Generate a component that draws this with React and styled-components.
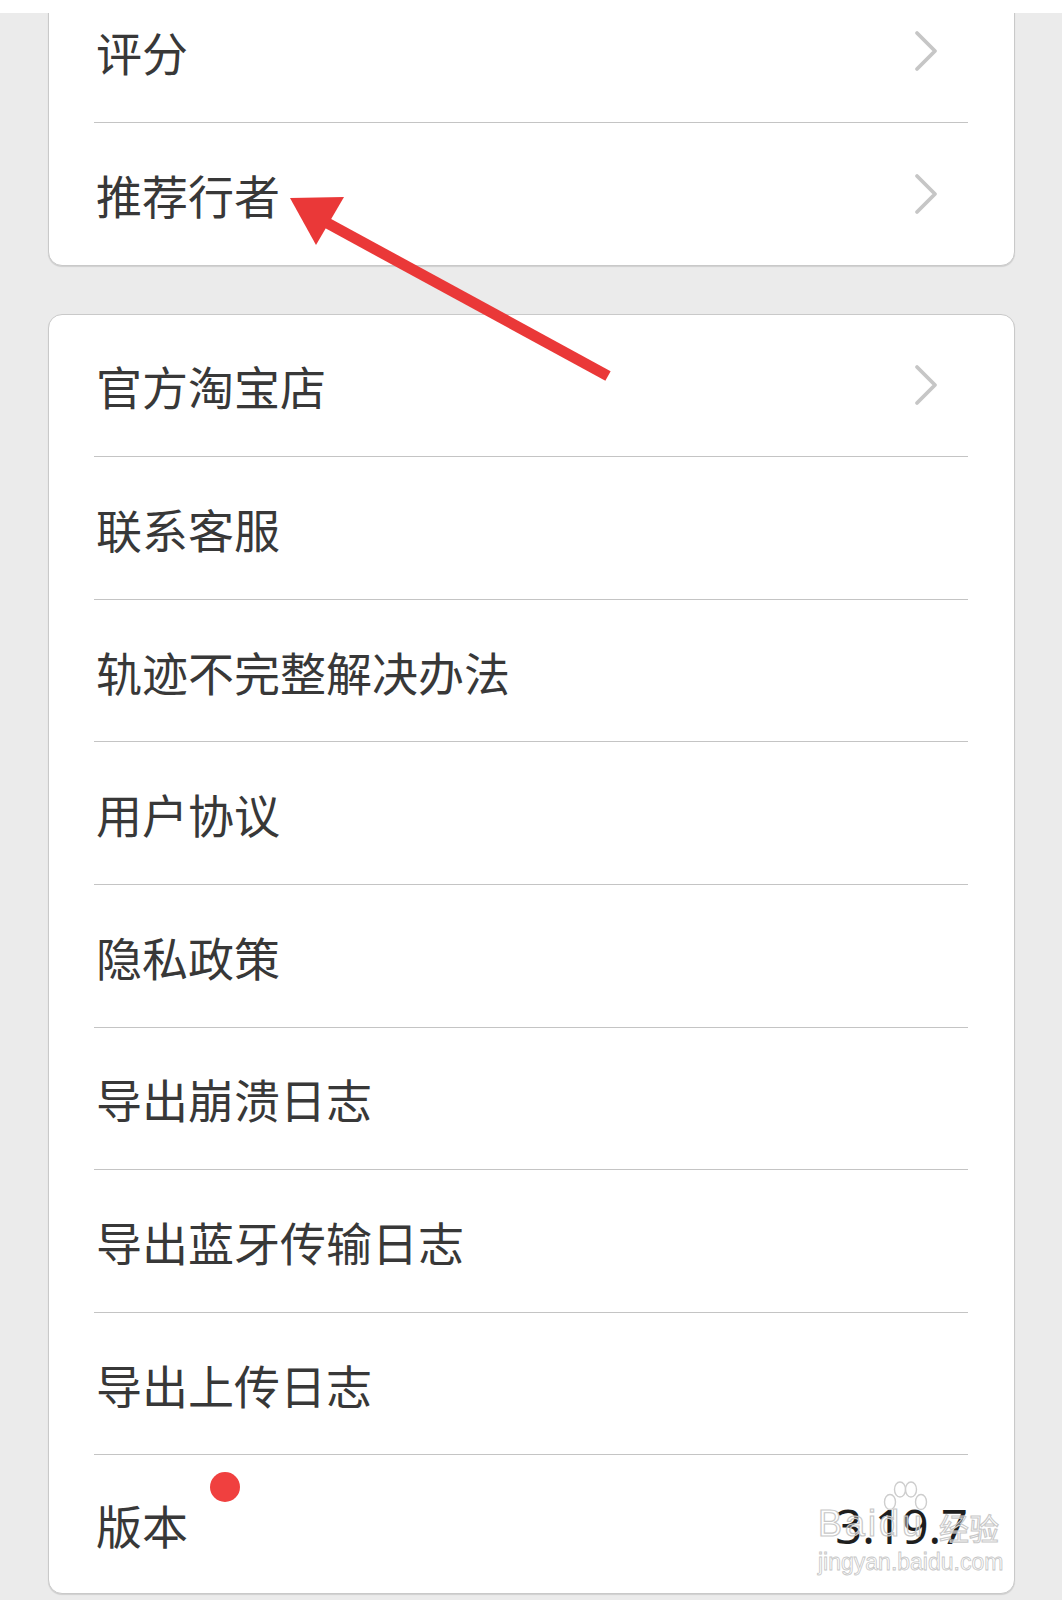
import React from "react";
import styled, { createGlobalStyle } from "styled-components";

const GlobalStyle = createGlobalStyle`
  html, body {
    margin: 0;
    padding: 0;
    background: #ebebeb;
  }
  body {
    font-family: "Noto Sans CJK SC", "Noto Sans", sans-serif;
  }
`;

const groups = [
  [
    { label: "评分", more: true },
    { label: "推荐行者", more: true },
  ],
  [
    { label: "官方淘宝店", more: true },
    { label: "联系客服" },
    { label: "轨迹不完整解决办法" },
    { label: "用户协议" },
    { label: "隐私政策" },
    { label: "导出崩溃日志" },
    { label: "导出蓝牙传输日志" },
    { label: "导出上传日志" },
    { label: "版本", dot: true, value: "3.19.7" },
  ],
];

function Chevron() {
  return (
    <ChevronIcon width="24" height="42" viewBox="0 0 24 42">
      <polyline
        points="3,3 21,21 3,39"
        fill="none"
        stroke="#c6c6c6"
        strokeWidth="3.8"
        strokeLinecap="round"
        strokeLinejoin="round"
      />
    </ChevronIcon>
  );
}

function Paw() {
  return (
    <PawIcon width="46" height="36" viewBox="0 0 46 36">
      <g fill="rgba(255,255,255,0.5)" stroke="#cdcdcd" strokeWidth="1.4">
        <ellipse cx="8" cy="21" rx="5.5" ry="7.5" />
        <ellipse cx="18" cy="8.5" rx="5.5" ry="7.5" />
        <ellipse cx="29" cy="8.5" rx="5.5" ry="7.5" />
        <ellipse cx="39" cy="21" rx="5.5" ry="7.5" />
      </g>
    </PawIcon>
  );
}

export default function App() {
  return (
    <>
      <GlobalStyle />
      <Page>
        <TopBar />
        <List>
          {groups.map((rows, gi) => (
            <Card key={gi}>
              {rows.map((r) => (
                <Row key={r.label} $short={!!r.value}>
                  <Label>
                    {r.label}
                    {r.dot && <Dot />}
                  </Label>
                  {r.more && <Chevron />}
                  {r.value && <Value>{r.value}</Value>}
                </Row>
              ))}
            </Card>
          ))}
        </List>

        <Arrow width="1062" height="1600" viewBox="0 0 1062 1600">
          <line x1="608" y1="376" x2="318" y2="218" stroke="#ea3838" strokeWidth="11" />
          <polygon points="290,198 344,197 316,245" fill="#ea3838" />
        </Arrow>

        <Watermark>
          <Logo>
            <Latin>
              Baidu
              <Paw />
            </Latin>
            <Cn>经验</Cn>
          </Logo>
          <Site>jingyan.baidu.com</Site>
        </Watermark>
      </Page>
    </>
  );
}

const Page = styled.div`
  position: relative;
  width: 1062px;
  height: 1600px;
  overflow: hidden;
  background: #ebebeb;
`;

const TopBar = styled.div`
  position: relative;
  z-index: 2;
  height: 13px;
  background: #ffffff;
`;

const List = styled.div`
  display: flex;
  flex-direction: column;
  gap: 48px;
  margin-top: -33.5px;
  padding: 0 47px 0 48px;
`;

const Card = styled.div`
  background: #ffffff;
  border: 1px solid #c9c9c9;
  border-radius: 14px;
  box-shadow: 0 1px 1px rgba(0, 0, 0, 0.12);
`;

const Row = styled.div`
  display: flex;
  align-items: center;
  justify-content: space-between;
  height: ${(p) => (p.$short ? "138px" : "141.6px")};
  margin: 0 46px 0 45px;
  padding-left: 2px;
  border-bottom: 1px solid #c4c4c4;
  &:last-child {
    border-bottom: none;
  }
`;

const ChevronIcon = styled.svg`
  margin-right: 30px;
`;

const Label = styled.span`
  position: relative;
  font-size: 46px;
  line-height: 1;
  color: #383838;
`;

const Dot = styled.i`
  position: absolute;
  left: calc(100% + 22px);
  top: -29px;
  width: 30px;
  height: 30px;
  border-radius: 50%;
  background: #f0403f;
`;

const Value = styled.span`
  font-family: "Noto Sans", sans-serif;
  font-size: 47px;
  line-height: 1;
  color: #1e1e1e;
  margin-top: 4px;
`;

const Arrow = styled.svg`
  position: absolute;
  left: 0;
  top: 0;
  pointer-events: none;
`;

const Watermark = styled.div`
  position: absolute;
  left: 818px;
  top: 1506px;
  display: flex;
  flex-direction: column;
  align-items: flex-start;
  pointer-events: none;
`;

const Logo = styled.div`
  display: flex;
  align-items: flex-end;
  gap: 14px;
`;

const Latin = styled.span`
  position: relative;
  font-family: "Liberation Sans", sans-serif;
  font-size: 36px;
  line-height: 1;
  letter-spacing: 3px;
  color: rgba(255, 255, 255, 0.35);
  -webkit-text-stroke: 1.2px #c8c8c8;
`;

const PawIcon = styled.svg`
  position: absolute;
  left: 64px;
  top: -25px;
`;

const Cn = styled.span`
  font-family: "Noto Sans CJK SC", sans-serif;
  font-size: 30px;
  line-height: 1;
  color: rgba(255, 255, 255, 0.35);
  -webkit-text-stroke: 1.1px #c8c8c8;
`;

const Site = styled.div`
  font-family: "Liberation Sans", sans-serif;
  font-size: 23px;
  line-height: 1;
  margin-top: 9px;
  color: #ffffff;
  -webkit-text-stroke: 0.8px #c6c6c6;
`;
